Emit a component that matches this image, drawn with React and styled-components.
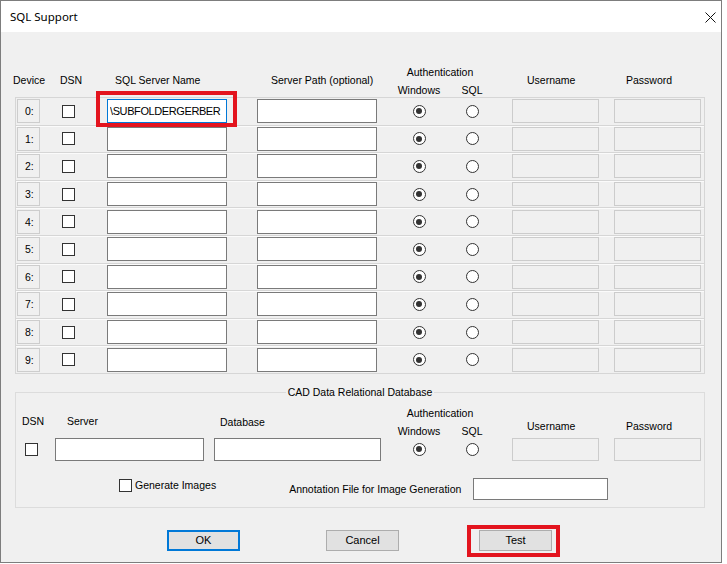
import React from "react";
import styled, { createGlobalStyle } from "styled-components";

const GlobalStyle = createGlobalStyle`
  html, body {
    margin: 0;
    padding: 0;
    background: #ffffff;
  }
  body {
    font-family: "Liberation Sans", Arial, sans-serif;
    font-size: 10.5px;
    color: #000;
  }
  * {
    box-sizing: border-box;
  }
`;

// column tracks shared by the header and the device rows
const COLUMNS = "46px 45px 150px 135px 54px 52px 116px 87px";
// tracks for the CAD group box
const GROUP_COLUMNS = "39px 159px 178px 54px 52px 116px 87px";

const Window = styled.div`
  width: 722px;
  border: 1px solid #7d7d7d;
  background: #f0f0f0;
`;

const TitleBar = styled.div`
  height: 31px;
  background: #ffffff;
  display: flex;
  align-items: center;
  justify-content: space-between;
  padding: 0 5px 0 9px;
  font-family: "Noto Sans", "Liberation Sans", sans-serif;
  font-size: 11.5px;
`;

const CloseIcon = styled.svg`
  width: 11px;
  height: 11px;
  margin-top: 1px;
`;

const Body = styled.div`
  padding: 28px 16px 11px 14px;
`;

const Header = styled.div`
  display: grid;
  grid-template-columns: ${COLUMNS};
  height: 37px;
  padding-left: 1px;
`;

const HeadLabel = styled.span`
  align-self: ${(p) => (p.$bottom !== undefined ? "end" : "center")};
  margin-top: ${(p) => (p.$bottom !== undefined ? 0 : 3)}px;
  margin-left: ${(p) => p.$ml || 0}px;
  margin-bottom: ${(p) => p.$bottom || 0}px;
  line-height: 13px;
  white-space: nowrap;
`;

const AuthBlock = styled.div`
  grid-column: span 2;
  align-self: end;
  display: grid;
  grid-template-columns: 54px 52px;
  text-align: center;
`;

const AuthTitle = styled.span`
  grid-column: 1 / -1;
  line-height: 16px;
  margin-bottom: 3px;
  padding-right: 10px;
`;

const AuthSub = styled.span`
  line-height: 14px;
`;

const RowList = styled.div`
  height: 277px;
  border: 1px solid #d6d6d6;
  display: flex;
  flex-direction: column;
`;

const Row = styled.div`
  flex: 1;
  display: grid;
  grid-template-columns: ${COLUMNS};
  align-items: center;

  & + & {
    border-top: 1px solid #d6d6d6;
    box-shadow: inset 0 1px 0 #fbfbfb;
  }
`;

const DeviceLabel = styled.span`
  width: 23px;
  height: 24px;
  margin-left: 1px;
  border: 1px solid #cdcdcd;
  padding-left: 7px;
  line-height: 22px;
`;

const CheckBox = styled.span`
  display: inline-block;
  width: 13px;
  height: 13px;
  margin-left: ${(p) => p.$ml || 0}px;
  border: 1px solid #333333;
  background: #ffffff;
  flex: none;
`;

const TextBox = styled.input`
  width: ${(p) => p.$w || 120}px;
  height: ${(p) => p.$h || 24}px;
  margin: 0 0 0 ${(p) => p.$ml || 0}px;
  padding: 0 2px;
  border: 1px solid ${(p) => (p.$focused ? "#0078d7" : "#7a7a7a")};
  background: #ffffff;
  font-family: inherit;
  font-size: 11px;
  color: #000;
  outline: none;
  letter-spacing: ${(p) => (p.$tight ? "-0.4px" : "normal")};

  &:disabled {
    background: #f0f0f0;
    border-color: #cccccc;
  }
`;

const Radio = styled.span`
  justify-self: center;
  position: relative;
  width: 13px;
  height: 13px;
  border-radius: 50%;
  border: 1px solid #333333;
  background: #ffffff;

  &::after {
    content: "";
    display: ${(p) => (p.$checked ? "block" : "none")};
    position: absolute;
    left: 2.5px;
    top: 2.5px;
    width: 6px;
    height: 6px;
    border-radius: 50%;
    background: #333333;
  }
`;

const Marked = styled.div`
  position: relative;
  display: flex;
  justify-self: start;
`;

const Highlight = styled.span`
  position: absolute;
  inset: ${(p) => p.$inset};
  border: 4px solid #e3141e;
  pointer-events: none;
`;

const Group = styled.fieldset`
  margin: 11.5px 0 0;
  padding: 2px 0 7px;
  border: 1px solid #dcdcdc;
  min-width: 0;
`;

const GroupTitle = styled.legend`
  margin: 0 auto;
  padding: 0 2px;
  line-height: 13px;
`;

const GroupGrid = styled.div`
  display: grid;
  grid-template-columns: ${GROUP_COLUMNS};
  grid-template-rows: 37px 23px;
  align-items: center;
`;

const OptionsRow = styled.div`
  display: flex;
  align-items: center;
  height: 22px;
  margin-top: 17px;
  padding-left: 103px;
`;

const CheckLabel = styled.label`
  display: flex;
  align-items: center;
  gap: 3px;
  align-self: flex-start;
  margin-top: 1px;
  line-height: 13px;
`;

const FieldLabel = styled.span`
  margin-left: ${(p) => p.$ml || 0}px;
  white-space: nowrap;
`;

const ButtonRow = styled.div`
  display: flex;
  margin-top: 22px;
  padding-left: 152px;
`;

const Button = styled.button`
  position: relative;
  width: 73px;
  height: 21px;
  margin: 0 0 0 ${(p) => p.$ml || 0}px;
  padding: 0;
  border: ${(p) => (p.$primary ? "2px solid #0078d7" : "1px solid #adadad")};
  background: #e1e1e1;
  font-family: inherit;
  font-size: 11px;
  color: #000;
`;

const devices = [0, 1, 2, 3, 4, 5, 6, 7, 8, 9];

const DeviceRow = ({ index }) => {
  const first = index === 0;
  return (
    <Row>
      <DeviceLabel>{index}:</DeviceLabel>
      <CheckBox />
      {first ? (
        <Marked>
          <TextBox readOnly $focused $tight defaultValue="\SUBFOLDERGERBER" />
          <Highlight $inset="-8px -10px -4px -11px" />
        </Marked>
      ) : (
        <TextBox readOnly />
      )}
      <TextBox readOnly />
      <Radio $checked />
      <Radio />
      <TextBox disabled $ml={14} $w={87} />
      <TextBox disabled $w={87} />
    </Row>
  );
};

const App = () => (
  <>
    <GlobalStyle />
    <Window>
      <TitleBar>
        <span>SQL Support</span>
        <CloseIcon viewBox="0 0 11 11">
          <path d="M0.5 0.5 L10.5 10.5 M10.5 0.5 L0.5 10.5" stroke="#111" strokeWidth="1" />
        </CloseIcon>
      </TitleBar>
      <Body>
        <Header>
          <HeadLabel $ml={-3}>Device</HeadLabel>
          <HeadLabel $ml={-2}>DSN</HeadLabel>
          <HeadLabel $ml={8}>SQL Server Name</HeadLabel>
          <HeadLabel $ml={14}>Server Path (optional)</HeadLabel>
          <AuthBlock>
            <AuthTitle>Authentication</AuthTitle>
            <AuthSub>Windows</AuthSub>
            <AuthSub>SQL</AuthSub>
          </AuthBlock>
          <HeadLabel $ml={29}>Username</HeadLabel>
          <HeadLabel $ml={12}>Password</HeadLabel>
        </Header>

        <RowList>
          {devices.map((d) => (
            <DeviceRow key={d} index={d} />
          ))}
        </RowList>

        <Group>
          <GroupTitle>CAD Data Relational Database</GroupTitle>
          <GroupGrid>
            <HeadLabel $ml={6} $bottom={10}>DSN</HeadLabel>
            <HeadLabel $ml={12} $bottom={10}>Server</HeadLabel>
            <HeadLabel $ml={6} $bottom={9}>Database</HeadLabel>
            <AuthBlock>
              <AuthTitle>Authentication</AuthTitle>
              <AuthSub>Windows</AuthSub>
              <AuthSub>SQL</AuthSub>
            </AuthBlock>
            <HeadLabel $ml={29} $bottom={5}>Username</HeadLabel>
            <HeadLabel $ml={12} $bottom={5}>Password</HeadLabel>

            <CheckBox $ml={9} />
            <TextBox readOnly $w={149} $h={23} />
            <TextBox readOnly $w={167} $h={23} />
            <Radio $checked />
            <Radio />
            <TextBox disabled $ml={14} $w={87} $h={23} />
            <TextBox disabled $w={87} $h={23} />
          </GroupGrid>
          <OptionsRow>
            <CheckLabel>
              <CheckBox />
              Generate Images
            </CheckLabel>
            <FieldLabel $ml={73}>Annotation File for Image Generation</FieldLabel>
            <TextBox readOnly $ml={12} $w={135} $h={22} />
          </OptionsRow>
        </Group>

        <ButtonRow>
          <Button $primary>OK</Button>
          <Button $ml={86}>Cancel</Button>
          <Button $ml={80}>
            Test
            <Highlight $inset="-6px -9px -7px -13px" />
          </Button>
        </ButtonRow>
      </Body>
    </Window>
  </>
);

export default App;
